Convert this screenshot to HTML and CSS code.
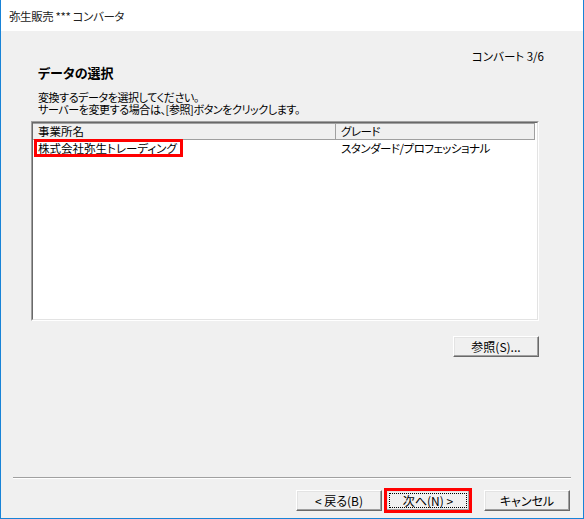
FILE: index.html
```html
<!DOCTYPE html>
<html lang="ja">
<head>
    <meta charset="UTF-8">
    <title>弥生販売 *** コンバータ</title>
    <link rel="stylesheet" href="styles.css">
</head>
<body>
    <div class="window">
        <div class="titlebar">弥生販売 *** コンバータ</div>

        <div class="content">
            <div class="step">コンバート 3/6</div>
            <h1>データの選択</h1>
            <div class="desc">
                <div class="desc-line">変換するデータを選択してください。</div>
                <div class="desc-line">サーバーを変更する場合は、[参照]ボタンをクリックします。</div>
            </div>

            <!-- list of offices -->
            <div class="listbox">
                <div class="listbox-inner">
                    <div class="list-head">
                        <div class="col col-name">事業所名</div>
                        <div class="col col-grade">グレード</div>
                    </div>
                    <div class="list-row">
                        <div class="col col-name"><span class="mark">株式会社弥生トレーディング</span></div>
                        <div class="col col-grade">スタンダード/プロフェッショナル</div>
                    </div>
                </div>
            </div>

            <div class="browse-row">
                <button class="btn">参照(S)...</button>
            </div>

            <div class="separator"></div>

            <div class="footer">
                <button class="btn">&lt; 戻る(B)</button>
                <button class="btn btn-next">次へ(N) &gt;</button>
                <button class="btn btn-cancel">キャンセル</button>
            </div>
        </div>
    </div>
</body>
</html>
```

FILE: styles.css
```css
body {
    margin: 0;
    font-family: "Noto Sans CJK JP", "Noto Sans", sans-serif;
    font-size: 11.5px;
    font-feature-settings: "palt";
    color: #000;
    background: #fff;
}

.window {
    width: 584px;
    height: 519px;
    box-sizing: border-box;
    border: 1px solid #1883d7;
    border-top: none;
    display: flex;
    flex-direction: column;
}

.titlebar {
    height: 31px;
    line-height: 32px;
    padding-left: 8px;
    background: #fff;
    color: #222;
    font-size: 11.5px;
    letter-spacing: -0.4px;
}

.content {
    flex: 1;
    background: #f0f0f0;
    display: flex;
    flex-direction: column;
}

.step {
    margin-top: 18px;
    padding-right: 39px;
    text-align: right;
    line-height: 14px;
}

h1 {
    margin: 2px 0 0 37px;
    font-size: 13px;
    line-height: 16px;
    font-weight: bold;
}

.desc {
    margin: 10px 0 0 37px;
    letter-spacing: -0.4px;
}

.desc-line {
    height: 12px;
    line-height: 12px;
    font-size: 11px;
}

.listbox {
    margin: 6px 0 0 30px;
    width: 508px;
    height: 200px;
    box-sizing: border-box;
    border: 1px solid;
    border-color: #a0a0a0 #fff #fff #a0a0a0;
}

.listbox-inner {
    height: 100%;
    box-sizing: border-box;
    border: 1px solid;
    border-color: #696969 #e3e3e3 #e3e3e3 #696969;
    background: #fff;
}

.list-head,
.list-row {
    display: flex;
}

.list-head .col {
    height: 15px;
    line-height: 15px;
    background: #f0f0f0;
    border-right: 1px solid #a0a0a0;
    border-bottom: 1px solid #a0a0a0;
    border-top: 1px solid #a0a0a0;
    box-sizing: content-box;
}

.col {
    padding-left: 5px;
    box-sizing: border-box;
}

.col-name {
    width: 303px;
}

.list-head .col-name {
    width: 297px;
}

.col-grade {
    width: 199px;
    letter-spacing: -0.5px;
}

.list-head .col-grade {
    width: 193px;
}

.list-row .col {
    height: 16px;
    line-height: 16px;
}

.list-row .col-name {
    padding-left: 3px;
}

.mark {
    position: relative;
    padding: 0 2px;
}

.mark::after {
    content: "";
    position: absolute;
    left: -2px;
    right: -4px;
    top: -1px;
    bottom: -1px;
    border: 3px solid #f00;
}

.browse-row {
    display: flex;
    justify-content: flex-end;
    margin: 15px 44px 0 0;
}

.btn {
    width: 86px;
    height: 21px;
    padding: 0;
    font-family: inherit;
    font-size: 12px;
    font-feature-settings: "palt";
    color: #000;
    background: #f0f0f0;
    border: 1px solid;
    border-color: #fff #696969 #696969 #fff;
    box-shadow: inset -1px -1px #a0a0a0, inset 1px 1px #e3e3e3;
}

.separator {
    margin: 120px 12px 0 12px;
    border-top: 1px solid #a0a0a0;
    border-bottom: 1px solid #fff;
}

.footer {
    display: flex;
    justify-content: flex-end;
    padding: 11px 13px 0 0;
}

.btn-next {
    position: relative;
    margin-left: 4px;
    width: 84px;
    outline: 1px dotted #000;
    outline-offset: -4px;
}

.btn-next::after {
    content: "";
    position: absolute;
    left: -3px;
    right: -3px;
    top: -3px;
    bottom: -3px;
    border: 3px solid #f00;
}

.btn-cancel {
    margin-left: 14px;
}
```
